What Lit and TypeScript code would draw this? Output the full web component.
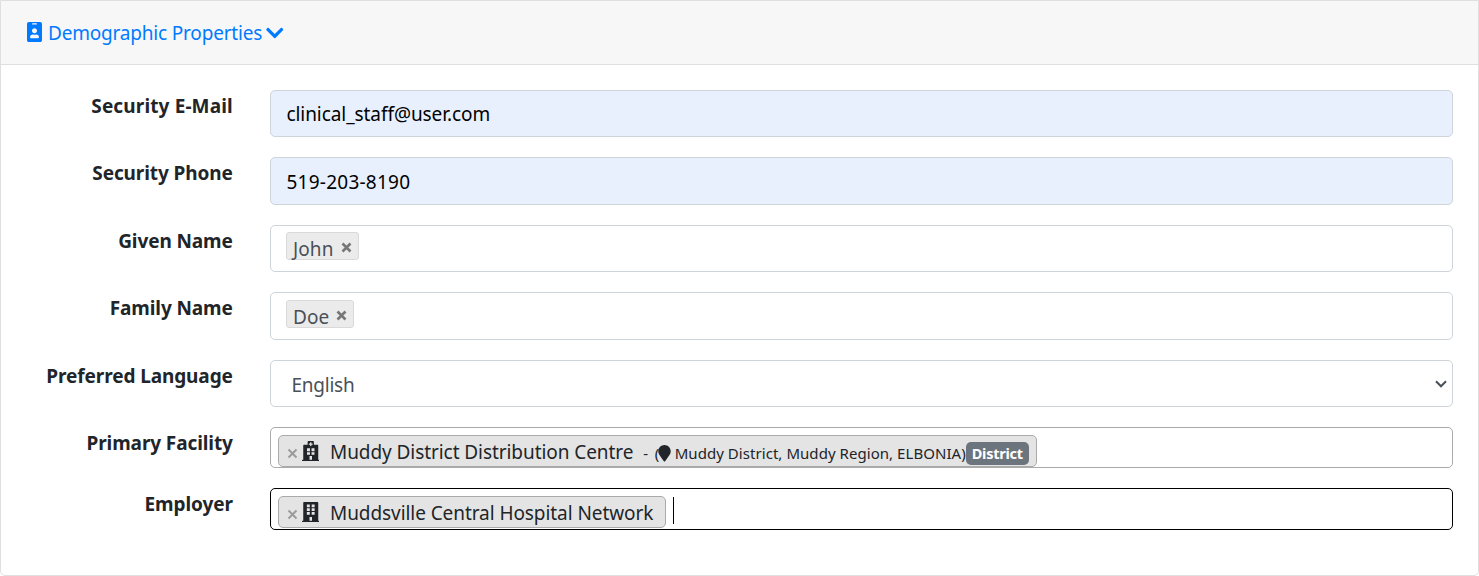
import { LitElement, html, css, svg } from "lit";
import { customElement } from "lit/decorators.js";

const glyphs = {
  badge: { w: 384, d: "M336 0H48C21.5 0 0 21.5 0 48v416c0 26.5 21.5 48 48 48h288c26.5 0 48-21.5 48-48V48c0-26.5-21.5-48-48-48zM144 32h96c8.8 0 16 7.2 16 16s-7.2 16-16 16h-96c-8.8 0-16-7.2-16-16s7.2-16 16-16zm48 128c35.3 0 64 28.7 64 64s-28.7 64-64 64-64-28.7-64-64 28.7-64 64-64zm112 236.8c0 10.6-10 19.2-22.4 19.2H102.4C90 416 80 407.4 80 396.8v-19.2c0-31.8 30.1-57.6 67.2-57.6h5c12.3 5.1 25.7 8 39.8 8s27.6-2.9 39.8-8h5c37.1 0 67.2 25.8 67.2 57.6v19.2z" },
  chevron: { w: 448, d: "M207.029 381.476L12.686 187.132c-9.373-9.373-9.373-24.569 0-33.941l22.667-22.667c9.357-9.357 24.522-9.375 33.901-.04L224 284.505l154.745-154.021c9.379-9.335 24.544-9.317 33.901.04l22.667 22.667c9.373 9.373 9.373 24.569 0 33.941L240.971 381.476c-9.373 9.372-24.569 9.372-33.942 0z" },
  hospital: { w: 448, d: "M448 492v20H0v-20c0-6.627 5.373-12 12-12h20V120c0-13.255 10.745-24 24-24h88V24c0-13.255 10.745-24 24-24h112c13.255 0 24 10.745 24 24v72h88c13.255 0 24 10.745 24 24v360h20c6.627 0 12 5.373 12 12zM128 186h76v74h-76zM244 186h76v74h-76zM128 286h76v66h-76zM244 286h76v66h-76zM192 384h64v96h-64zM182 96h26v26a6 6 0 0 0 6 6h20a6 6 0 0 0 6-6V96h26a6 6 0 0 0 6-6V70a6 6 0 0 0-6-6h-26V38a6 6 0 0 0-6-6h-20a6 6 0 0 0-6 6v26h-26a6 6 0 0 0-6 6v20a6 6 0 0 0 6 6z" },
  building: { w: 448, d: "M436 480h-20V24c0-13.255-10.745-24-24-24H56C42.745 0 32 10.745 32 24v456H12c-6.627 0-12 5.373-12 12v20h448v-20c0-6.627-5.373-12-12-12zM124 62h76v70h-76zM248 62h76v70h-76zM124 158h76v70h-76zM248 158h76v70h-76zM124 254h76v70h-76zM248 254h76v70h-76zM192 384h64v96h-64z" },
  marker: { w: 384, d: "M172.268 501.67C26.97 291.031 0 269.413 0 192 0 85.961 85.961 0 192 0s192 85.961 192 192c0 77.413-26.97 99.031-172.268 309.67-9.535 13.774-29.93 13.773-39.464 0z" },
};

const icon = (name: keyof typeof glyphs) => html`<svg class="icon ${name}" viewBox="0 0 ${glyphs[name].w} 512">
  ${svg`<path fill="currentColor" fill-rule="evenodd" d=${glyphs[name].d}></path>`}
</svg>`;

@customElement("app-root")
export class AppRoot extends LitElement {
  static styles = css`
    :host { display: block; font-family: "Segoe UI", "Noto Sans", sans-serif; font-size: 19px; line-height: 30px; color: #212529; }
    * { box-sizing: border-box; }
    .card { height: 576px; border: 1px solid #dfdfdf; border-radius: 0 0 5px 5px; background: #fff; }
    .header { height: 64px; display: flex; align-items: flex-start; padding: 17px 0 0 25px; background: #f7f7f7; border-bottom: 1px solid #dfdfdf; color: #007bff; white-space: nowrap; }
    .title { letter-spacing: -0.19px; }
    .icon { display: block; flex: none; width: 17.5px; height: 20px; }
    .icon.badge { width: 15px; margin: 4px 6px 0 1px; }
    .icon.chevron { margin: 5px 0 0 4px; }
    .body { padding: 24.9px 25px 0 0; display: flex; flex-direction: column; gap: 20px; }
    .row { display: grid; grid-template-columns: 231.8px 1183px; grid-template-rows: 100%; column-gap: 37.2px; height: 47.5px; }
    .row.multi { height: 41px; }
    .row.multi:last-child { height: 41.5px; }
    .label { padding-top: 0.7px; font-weight: 700; text-align: right; white-space: nowrap; letter-spacing: -0.1px; }
    .row:first-child .label { letter-spacing: 0.13px; }
    .control { width: 100%; height: 100%; display: flex; align-items: flex-start; border: 1px solid #ced4da; border-radius: 5px; background: #fff; }
    .filled { font: inherit; padding: 0 16px; background: #e8f0fe; color: #000; outline: none; }
    .mail { letter-spacing: -0.07px; padding-left: 15.5px; }
    .phone { letter-spacing: 0.24px; padding-top: 1px; padding-left: 15.5px; }
    .tags { padding: 6.3px 15px 0; color: #495057; }
    .tag { height: 28px; display: flex; padding: 1px 6px 0; border: 1px solid #d9d9d9; border-radius: 3px; background: #ebebeb; letter-spacing: 0.1px; }
    .row:nth-child(4) .tags { padding-top: 6.65px; }
    .remove { width: 11px; height: 11px; margin: 8px 0 0 7px; color: #777; }
    .select { padding: 9px 5px 0 20.5px; justify-content: space-between; color: #495057; letter-spacing: -0.25px; }
    .arrow { width: 12px; height: 8px; margin-top: 10px; color: #495057; }
    .multi .control { padding: 7px; border-color: #aaa; }
    .multi .control.focus { border-color: #000; }
    .chip { height: 32px; display: flex; padding: 1px 7px 0 8px; border: 1px solid #aaa; border-radius: 5px; background: #e4e4e4; white-space: nowrap; }
    .chip .remove { margin: 11px 5px 0 0; color: #999; }
    .chip .icon { margin: 4.1px 10.5px 0 -1px; }
    .facility, .employer { letter-spacing: -0.07px; }
    .employer { margin-right: 4.5px; }
    .small { font-size: 15px; margin-left: 10px; padding-top: 1px; display: flex; word-spacing: 2.6px; }
    .place { letter-spacing: 0.05px; word-spacing: 0; }
    .chip .marker { width: 13px; height: 16.5px; margin: 7px 3.5px 0 -1px; }
    .pill { height: 23px; margin-top: 5px; padding: 0 6px; border-radius: 5px; background: #6c757d; color: #fff; font-size: 14.5px; font-weight: 700; line-height: 23px; letter-spacing: -0.25px; }
    .caret { width: 1px; height: 27px; margin: 1px 0 0 7px; background: #000; }
  `;

  cross(width: number) {
    return html`<svg class="remove" viewBox="0 0 11 11"><path d="M1.5 1.5L9.5 9.5M9.5 1.5L1.5 9.5" fill="none" stroke="currentColor" stroke-width=${width}></path></svg>`;
  }

  field(label: string, control: unknown, multi = false) {
    return html`<div class="row ${multi ? "multi" : ""}"><div class="label"><span>${label}</span></div>${control}</div>`;
  }

  render() {
    return html`<div class="card">
      <div class="header">${icon("badge")}<span class="title">Demographic Properties</span>${icon("chevron")}</div>
      <div class="body">
        ${this.field("Security E-Mail", html`<input class="control filled mail" value="clinical_staff@user.com">`)}
        ${this.field("Security Phone", html`<input class="control filled phone" value="519-203-8190">`)}
        ${this.field("Given Name", html`<div class="control tags"><span class="tag">John${this.cross(2.6)}</span></div>`)}
        ${this.field("Family Name", html`<div class="control tags"><span class="tag">Doe${this.cross(2.6)}</span></div>`)}
        ${this.field("Preferred Language", html`<div class="control select"><span>English</span>
          <svg class="arrow" viewBox="0 0 12 8"><path d="M1 1.3L6 6.3L11 1.3" fill="none" stroke="currentColor" stroke-width="2"></path></svg></div>`)}
        ${this.field("Primary Facility", html`<div class="control"><div class="chip">${this.cross(1.8)}${icon("hospital")}<span class="facility">Muddy District Distribution Centre</span>
          <span class="small"><span>- (</span>${icon("marker")}<span class="place">Muddy District, Muddy Region, ELBONIA)</span></span><span class="pill">District</span></div></div>`, true)}
        ${this.field("Employer", html`<div class="control focus"><div class="chip">${this.cross(1.8)}${icon("building")}<span class="employer">Muddsville Central Hospital Network</span></div><span class="caret"></span></div>`, true)}
      </div>
    </div>`;
  }
}
